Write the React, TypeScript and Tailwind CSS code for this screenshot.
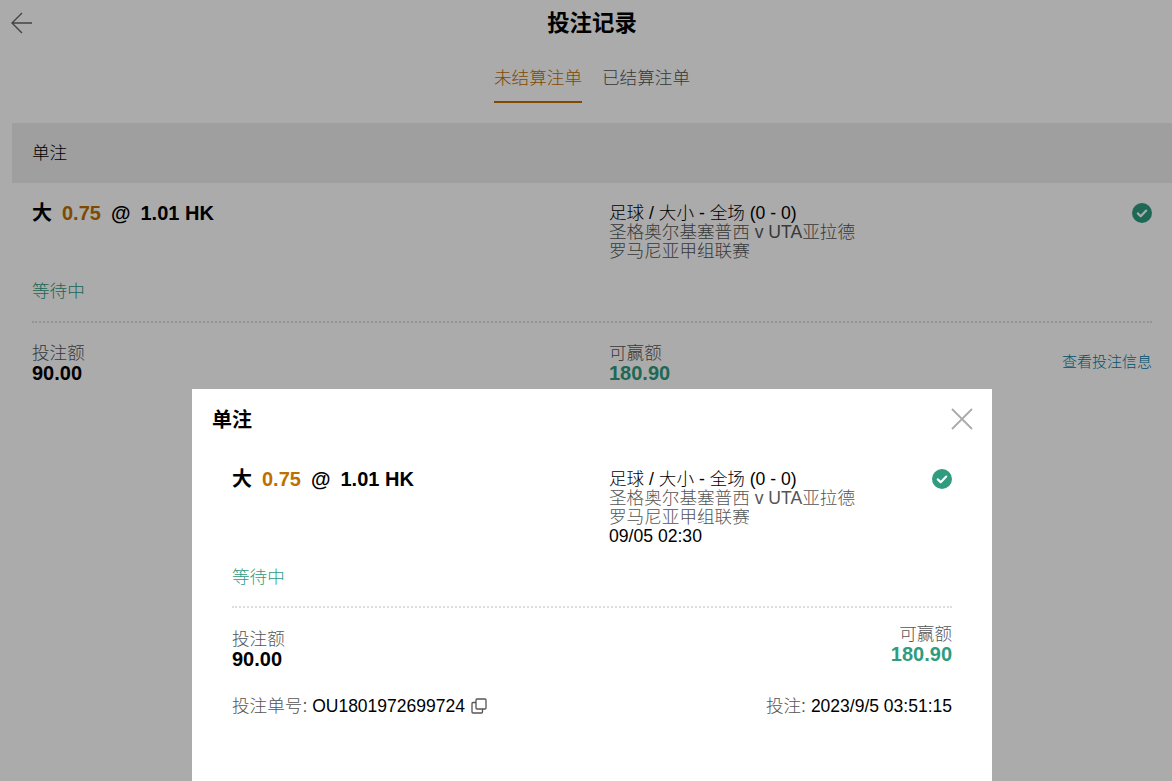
const font = "font-['Liberation_Sans','Noto_Sans_CJK_SC',sans-serif]";

function CheckBadge() {
  return (
    <svg width="20" height="20" viewBox="0 0 20 20" className="shrink-0">
      <circle cx="10" cy="10" r="10" fill="#2f9b7f" />
      <path d="M5.8 10.4l2.9 2.8 5.5-5.6" fill="none" stroke="#fff" strokeWidth="2.2" strokeLinecap="round" strokeLinejoin="round" />
    </svg>
  );
}

function Odds() {
  return (
    <div className="flex items-center gap-[10px] text-[20px] leading-[20px] font-bold text-black">
      <span>大</span>
      <span className="text-[#bf6e00]">0.75</span>
      <span>@</span>
      <span>1.01 HK</span>
    </div>
  );
}

function Match({ time }: { time?: string }) {
  return (
    <div className="pt-[1px] text-[17.6px] leading-[19px]">
      <div className="text-black">足球 / 大小 - 全场 (0 - 0)</div>
      <div className="text-[#555]">圣格奥尔基塞普西 v UTA亚拉德</div>
      <div className="text-[#555]">罗马尼亚甲组联赛</div>
      {time && <div className="text-black">{time}</div>}
    </div>
  );
}

function Amount({ label, value, green, right }: { label: string; value: string; green?: boolean; right?: boolean }) {
  return (
    <div className={right ? "text-right" : ""}>
      <div className="text-[17.6px] leading-[20px] text-[#555]">{label}</div>
      <div className={`text-[20px] leading-[20px] font-bold ${green ? "text-[#2f9b7f]" : "text-black"}`}>{value}</div>
    </div>
  );
}

export default function App() {
  return (
    <div className="h-[781px] overflow-hidden">
      <div className={`relative h-[781px] w-[1184px] bg-white font-light ${font}`}>
        {/* page behind the dialog */}
        <div className="relative flex h-[48px] items-center justify-center">
          <svg width="24" height="24" viewBox="0 0 24 24" className="absolute left-[10px] top-[11px]" fill="none" stroke="#666" strokeWidth="1.4">
            <path d="M22 12H2M12 2L2 12l10 10" />
          </svg>
          <h1 className="text-[22.4px] font-bold text-black">投注记录</h1>
        </div>
        <div className="flex justify-center gap-[20px] pt-[6px] text-[17.6px] leading-[48px]">
          <div className="h-[49px] border-b-2 border-[#bf6e00] text-[#bf6e00]">未结算注单</div>
          <div className="text-[#555]">已结算注单</div>
        </div>
        <div className="mx-[12px] mt-[20px] flex h-[60px] items-center bg-[#eee] pl-[20px] text-[17.6px] text-black">单注</div>
        <div className="px-[32px] pt-[20px]">
          <div className="flex h-[68px]">
            <div className="w-[577px]"><Odds /></div>
            <Match />
            <div className="ml-auto"><CheckBadge /></div>
          </div>
          <div className="h-[50px] pt-[8px] text-[17.6px] leading-[24px] text-[#2f9b7f]">等待中</div>
          <div className="border-t-2 border-dotted border-[#ddd]" />
          <div className="flex items-end pt-[20px]">
            <div className="w-[577px]"><Amount label="投注额" value="90.00" /></div>
            <Amount label="可赢额" value="180.90" green />
            <a className="mb-[11px] ml-auto text-[15px] leading-[20px] text-[#007ba5]">查看投注信息</a>
          </div>
        </div>

        {/* dim layer and dialog */}
        <div className="absolute inset-0 flex justify-center bg-black/33 pt-[389px]">
          <div className="h-[500px] w-[800px] bg-white">
            <div className="relative px-[20px] pt-[19px] text-[20px] leading-[24px] font-bold text-black">
              单注
              <svg width="24" height="24" viewBox="0 0 24 24" className="absolute right-[18px] top-[18px]" fill="none" stroke="#aaa" strokeWidth="1.8">
                <path d="M2 2l20 20M22 2L2 22" />
              </svg>
            </div>
            <div className="px-[40px] pt-[37px]">
              <div className="flex h-[94px]">
                <div className="w-[377px]"><Odds /></div>
                <Match time="09/05 02:30" />
                <div className="ml-auto"><CheckBadge /></div>
              </div>
              <div className="h-[43px] pt-[2px] text-[17.6px] leading-[24px] text-[#2f9b7f]">等待中</div>
              <div className="border-t-2 border-dotted border-[#ddd]" />
              <div className="flex items-start justify-between pt-[21px]">
                <Amount label="投注额" value="90.00" />
                <div className="-mt-[5px]"><Amount label="可赢额" value="180.90" green right /></div>
              </div>
              <div className="flex items-center justify-between pt-[25px] text-[17.5px] leading-[24px] text-black">
                <div className="flex items-center">
                  <span className="text-[17.6px] text-[#555]">投注单号:&nbsp;</span>
                  OU1801972699724
                  <svg width="16" height="16" viewBox="0 0 16 16" className="ml-[6px]" fill="none" stroke="#555" strokeWidth="1.3">
                    <rect x="5" y="1" width="10" height="10" rx="1" />
                    <path d="M5 4.5H2a1 1 0 0 0-1 1V14a1 1 0 0 0 1 1h8.500a1 1 0 0 0 1-1v-3" />
                  </svg>
                </div>
                <div>
                  <span className="text-[17.6px] text-[#555]">投注:&nbsp;</span>
                  2023/9/5 03:51:15
                </div>
              </div>
            </div>
          </div>
        </div>
      </div>
    </div>
  );
}
